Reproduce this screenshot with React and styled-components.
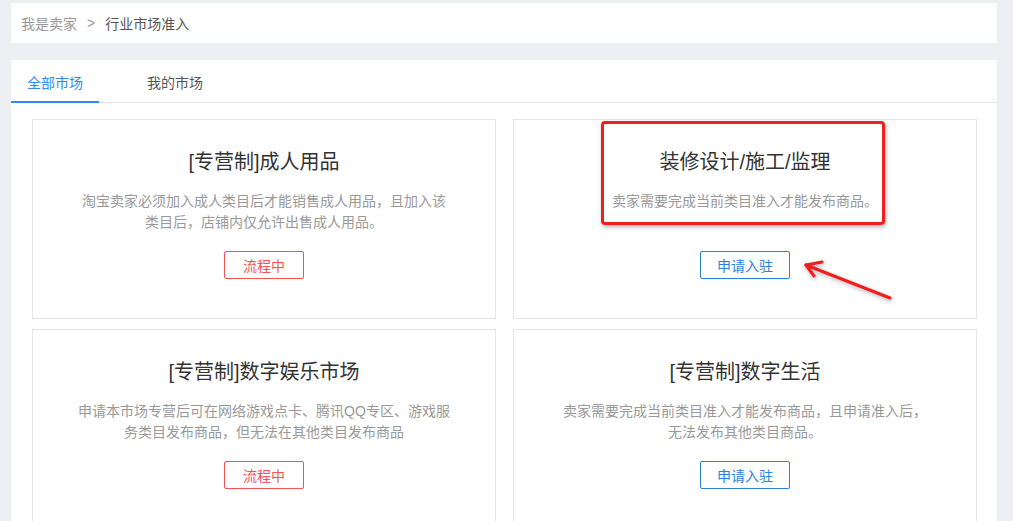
import React, { useState } from "react";
import styled, { createGlobalStyle } from "styled-components";

const GlobalStyle = createGlobalStyle`
  html, body {
    margin: 0;
    padding: 0;
    background: #edeff2;
    font-family: "Liberation Sans", "Noto Sans CJK SC", sans-serif;
    overflow: hidden;
  }
`;

const markets = [
  {
    title: "[专营制]成人用品",
    desc: "淘宝卖家必须加入成人类目后才能销售成人用品，且加入该类目后，店铺内仅允许出售成人用品。",
    status: "pending",
  },
  {
    title: "装修设计/施工/监理",
    desc: "卖家需要完成当前类目准入才能发布商品。",
    status: "apply",
    marked: true,
  },
  {
    title: "[专营制]数字娱乐市场",
    desc: "申请本市场专营后可在网络游戏点卡、腾讯QQ专区、游戏服务类目发布商品，但无法在其他类目发布商品",
    status: "pending",
  },
  {
    title: "[专营制]数字生活",
    desc: "卖家需要完成当前类目准入才能发布商品，且申请准入后，无法发布其他类目商品。",
    status: "apply",
  },
];

const App = () => {
  const [tabId, setTabId] = useState(0);

  return (
    <>
      <GlobalStyle />
      <StPage>
        <StCrumb>
          <span>我是卖家</span>
          <StSep>&gt;</StSep>
          <StCurrent>行业市场准入</StCurrent>
        </StCrumb>
        <StPanel>
          <StTabWrap>
            <StTab active={tabId === 0} onClick={() => setTabId(0)}>
              全部市场
            </StTab>
            <StTab active={tabId === 1} onClick={() => setTabId(1)}>
              我的市场
            </StTab>
          </StTabWrap>
          <StGrid>
            {markets.map((m) => (
              <StCard key={m.title}>
                {m.marked && <StMark />}
                <StTitle>{m.title}</StTitle>
                <StDesc>{m.desc}</StDesc>
                <StBtn kind={m.status}>
                  {m.status === "pending" ? "流程中" : "申请入驻"}
                </StBtn>
                {m.marked && (
                  <StArrow width="100" height="50" viewBox="0 0 100 50">
                    <g
                      stroke="#f21d1d"
                      strokeWidth="3"
                      strokeLinecap="round"
                      fill="none"
                    >
                      <path d="M87 41 L3 8" />
                      <path d="M3 8 L19 5" />
                      <path d="M3 8 L11 19" />
                    </g>
                  </StArrow>
                )}
              </StCard>
            ))}
          </StGrid>
        </StPanel>
      </StPage>
    </>
  );
};

export default App;

const StPage = styled.div`
  padding: 3px 16px 0 11px;
  height: 521px;
  box-sizing: border-box;
`;

const StCrumb = styled.div`
  background: #fff;
  height: 40px;
  display: flex;
  align-items: center;
  padding-left: 10px;
  font-size: 14px;
  color: #999;
`;

const StSep = styled.span`
  margin: 0 10px;
`;

const StCurrent = styled.span`
  color: #555;
`;

const StPanel = styled.div`
  margin-top: 17px;
  background: #fff;
  height: 480px;
`;

const StTabWrap = styled.div`
  display: flex;
  column-gap: 32px;
  height: 43px;
  border-bottom: 1px solid #e3e5e8;
  box-sizing: border-box;
`;

const StTab = styled.div`
  padding: 0 16px;
  display: flex;
  align-items: center;
  font-size: 14px;
  cursor: pointer;
  color: ${(p) => (p.active ? "#2d8cf0" : "#555")};
  border-bottom: 2px solid ${(p) => (p.active ? "#2d8cf0" : "transparent")};
  margin-bottom: -1px;
  padding-top: 2px;
`;

const StGrid = styled.div`
  display: grid;
  grid-template-columns: 464px 464px;
  column-gap: 17px;
  row-gap: 10px;
  padding: 16px 21px 0 21px;
`;

const StCard = styled.div`
  position: relative;
  height: 200px;
  box-sizing: border-box;
  border: 1px solid #e4e4e4;
  display: flex;
  flex-flow: column;
  align-items: center;
  padding-top: 28px;
`;

const StTitle = styled.div`
  font-size: 20px;
  line-height: 28px;
  color: #333;
`;

const StDesc = styled.div`
  margin-top: 15px;
  width: 376px;
  min-height: 42px;
  font-size: 14px;
  line-height: 21px;
  color: #999;
  text-align: center;
`;

const StBtn = styled.div`
  margin-top: 18px;
  min-width: 80px;
  height: 28px;
  box-sizing: border-box;
  padding: 0 16px;
  display: flex;
  justify-content: center;
  align-items: center;
  font-size: 14px;
  border-radius: 2px;
  cursor: pointer;
  color: ${(p) => (p.kind === "pending" ? "#f25454" : "#2a82d8")};
  border: 1px solid ${(p) => (p.kind === "pending" ? "#f25454" : "#2a82d8")};
`;

const StMark = styled.div`
  position: absolute;
  left: 87px;
  top: 1px;
  width: 284px;
  height: 104px;
  box-sizing: border-box;
  border: 3px solid #f21d1d;
  border-radius: 4px;
  box-shadow: 1px 2px 4px rgba(0, 0, 0, 0.3);
  pointer-events: none;
`;

const StArrow = styled.svg`
  position: absolute;
  left: 289px;
  top: 137px;
  overflow: visible;
  filter: drop-shadow(1px 2px 2px rgba(0, 0, 0, 0.3));
`;
